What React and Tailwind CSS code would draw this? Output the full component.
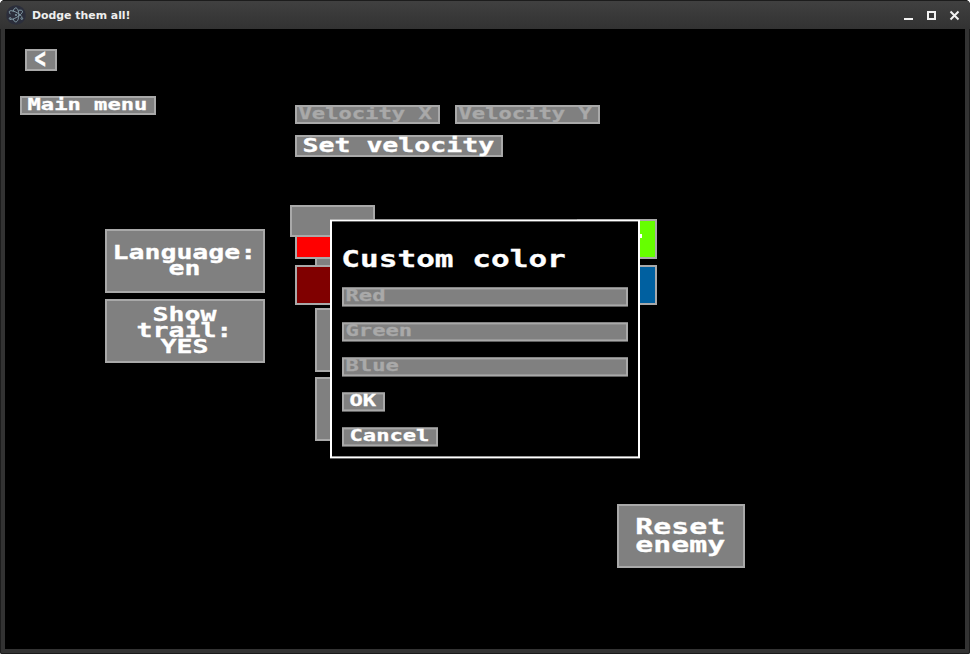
import React from "react";

// Wide bitmap-style lettering: every character cell is exactly 1em wide.
function PixelText({ children }) {
  return (
    <span className="inline-block h-[1em] whitespace-nowrap text-left leading-none align-top" style={{ width: `${children.length}em` }}>
      <span className="inline-block origin-left scale-x-[1.384] -translate-x-[0.03em] translate-y-[0.01em] text-[1.2em] leading-[0.8333em] align-top font-bold [-webkit-text-stroke:0.3px_currentColor] font-['DejaVu_Sans_Mono',monospace]">
        {children}
      </span>
    </span>
  );
}

function Button({ className = "", lines }) {
  return (
    <button className={`flex flex-col items-center justify-center border-2 border-[#a9a9a9] bg-[#808080] text-white ${className}`}>
      {lines.map((l) => (
        <PixelText key={l}>{l}</PixelText>
      ))}
    </button>
  );
}

function Field({ label, className = "" }) {
  return (
    <div className={`flex h-[19px] items-start border-2 border-[#a9a9a9] bg-[#808080] pl-[1.5px] text-[13.333px] text-[#a9a9a9] ${className}`}>
      <PixelText>{label}</PixelText>
    </div>
  );
}

function AppIcon() {
  return (
    <svg width="20" height="20" viewBox="0 0 20 20" fill="none" stroke="#8ba6b0" strokeWidth="0.9">
      <circle cx="10" cy="10" r="9.8" fill="#2b2e3b" stroke="none" />
      <path d="M4.4 9.2C3.2 7.8 3 6.6 3.7 6c1.300-.9 5 .2 8.300 2.300 1.700 1.100 3 2.300 3.800 3.300" />
      <path d="M12.600 5.300c2-.3 3.400-.1 3.800.6.700 1.400-2 4.300-5.600 6.400-2.800 1.600-5.200 2.300-6.600 2.100" />
      <path d="M7.200 14c.6 1.800 1.500 2.900 2.600 2.900 1.700 0 3-3.100 3-7s-1.300-7-3-7c-1.200 0-2.200 1.400-2.700 3.600" />
      <circle cx="10" cy="10" r="0.9" fill="#8ba6b0" stroke="none" />
      <circle cx="4.200" cy="13.500" r="0.9" />
      <circle cx="15.800" cy="13.500" r="0.9" />
    </svg>
  );
}

function TitleBar() {
  return (
    <header className="flex h-[29px] items-center border-t border-[#1c1c1c] bg-linear-to-b from-[#404040] to-[#323232] pl-1.5 pr-2.5">
      <AppIcon />
      <h1 className="ml-1.5 grow pt-px text-[10.9px] font-bold leading-[12px] text-[#eeeeee] font-['DejaVu_Sans',sans-serif]">Dodge them all!</h1>
      <svg width="57" height="11" viewBox="0 0 57 11" fill="none" stroke="#f2f2f2" strokeWidth="2" shapeRendering="crispEdges">
        <path d="M1 9h9" />
        <path d="M25 2h7v7h-7z" />
        <path d="M47.500 1.500l8 8M55.500 1.500l-8 8" shapeRendering="auto" />
      </svg>
    </header>
  );
}

function Dialog() {
  return (
    <section className="absolute left-[325px] top-[190px] z-10 flex h-[239px] w-[310px] translate-y-[0.4px] flex-col items-start border-2 border-white bg-black px-2.5 pt-7 text-white">
      <h2 className="h-[19px] text-[18.72px] leading-none"><PixelText>Custom color</PixelText></h2>
      <div className="mt-[19px] flex w-full flex-col items-start gap-4">
        <Field label="Red" className="w-full [&>span]:-mt-[0.8px]" />
        <Field label="Green" className="w-full [&>span]:-mt-[0.8px]" />
        <Field label="Blue" className="w-full [&>span]:-mt-[0.8px]" />
        <Button lines={["OK"]} className="h-[19px] px-1.5 pb-[3px] text-[13.333px]" />
        <Button lines={["Cancel"]} className="h-[19px] px-1.5 pb-[3px] text-[13.333px]" />
      </div>
    </section>
  );
}

export default function App() {
  return (
    <div className="h-[654px] w-[970px] bg-white">
      <div className="flex h-full flex-col overflow-hidden rounded-t-[5px] rounded-b-[2px] bg-[#333333] shadow-[inset_0_0_0_1px_#1c1c1c]">
        <TitleBar />
        <main className="relative mx-[5px] flex h-[620px] bg-black">
          <div className="flex w-[260px] flex-col items-start pt-5">
            <button className="ml-5 flex h-[22px] w-8 items-center justify-center border-2 border-[#a9a9a9] bg-[#808080] text-white">
              <span className="-translate-x-px -translate-y-[1.5px] scale-x-[1.1] scale-y-[1.65] text-[17px] font-bold leading-none [-webkit-text-stroke:0.3px_currentColor] font-['DejaVu_Sans_Mono',monospace]">&lt;</span>
            </button>
            <Button lines={["Main menu"]} className="ml-[15px] mt-[25px] h-[19px] w-[136px] pb-px text-[13.333px]" />
            <Button lines={["Language:", "en"]} className="ml-[100px] mt-[114px] h-16 w-40 text-base" />
            <Button lines={["Show", "trail:", "YES"]} className="ml-[100px] mt-1.5 h-16 w-40 text-base" />
          </div>
          <div className="ml-[25px] flex w-[455px] flex-col items-start pt-[76px]">
            <div className="ml-[5px] flex gap-[15px]">
              <Field label="Velocity X" className="w-[145px]" />
              <Field label="Velocity Y" className="w-[145px]" />
            </div>
            <Button lines={["Set velocity"]} className="ml-[5px] mt-[11px] h-[22px] w-[208px] text-base" />
            <div className="z-[1] mt-12 h-8 w-[85px] border-2 border-[#a9a9a9] bg-[#808080]" />
            <div className="-mt-[18px] ml-[5px] flex h-10 w-[362px] justify-between">
              <div className="w-20 border-2 border-[#a9a9a9] bg-[#ff0000]" />
              <div className="flex w-20 items-start justify-end border-2 border-[#a9a9a9] bg-[#66ff00] pr-[13px] pt-[13px]">
                <div className="h-1 w-1 bg-white" />
              </div>
            </div>
            <div className="ml-[25px] h-1.5 w-20 border-l-2 border-[#a9a9a9] bg-[#808080]" />
            <div className="ml-[5px] flex h-10 w-[362px] justify-between">
              <div className="w-20 border-2 border-[#a9a9a9] bg-[#800000]" />
              <div className="w-20 border-2 border-[#a9a9a9] bg-[#0060a0]" />
            </div>
            <div className="ml-[25px] mt-[3px] h-16 w-40 border-2 border-[#a9a9a9] bg-[#808080]" />
            <div className="ml-[25px] mt-[5px] h-16 w-40 border-2 border-[#a9a9a9] bg-[#808080]" />
            <Button lines={["Reset", "enemy"]} className="mt-[63px] h-16 w-32 self-end text-[18px]" />
          </div>
          <Dialog />
        </main>
      </div>
    </div>
  );
}
